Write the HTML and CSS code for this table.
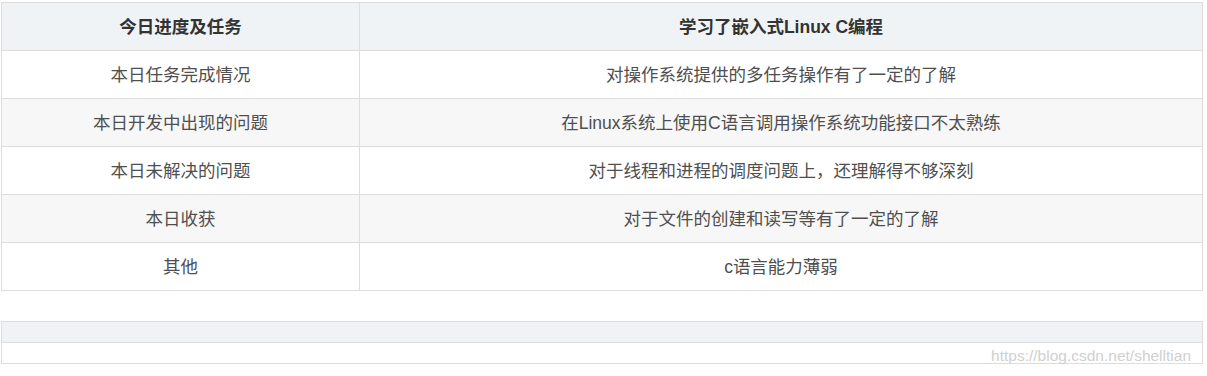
FILE: index.html
```html
<!DOCTYPE html>
<html lang="zh-CN">
<head>
<meta charset="utf-8">
<title>今日进度及任务</title>
<link rel="stylesheet" href="styles.css">
</head>
<body>
<div class="page">
  <table class="report">
    <thead>
      <tr>
        <th class="col-a">今日进度及任务</th>
        <th>学习了嵌入式Linux C编程</th>
      </tr>
    </thead>
    <tbody>
      <tr><td>本日任务完成情况</td><td>对操作系统提供的多任务操作有了一定的了解</td></tr>
      <tr><td>本日开发中出现的问题</td><td>在Linux系统上使用C语言调用操作系统功能接口不太熟练</td></tr>
      <tr><td>本日未解决的问题</td><td>对于线程和进程的调度问题上，还理解得不够深刻</td></tr>
      <tr><td>本日收获</td><td>对于文件的创建和读写等有了一定的了解</td></tr>
      <tr><td>其他</td><td>c语言能力薄弱</td></tr>
    </tbody>
  </table>
  <div class="second">
    <table class="empty">
      <thead><tr><th></th></tr></thead>
      <tbody><tr><td></td></tr></tbody>
    </table>
    <span class="watermark">https://blog.csdn.net/shelltian</span>
  </div>
</div>
</body>
</html>
```
FILE: styles.css
```css
html, body {
  margin: 0;
  padding: 0;
  background: #ffffff;
}
.page {
  padding: 2px 0 0 1px;
  width: 1202px;
  font-family: "Liberation Sans", "Noto Sans CJK SC", sans-serif;
}
.report {
  width: 1202px;
  border-collapse: collapse;
  table-layout: fixed;
  font-size: 17.5px;
  color: #4f4f4f;
}
.report th,
.report td {
  border: 1px solid #dddddd;
  height: 47px;
  padding: 0 8px;
  text-align: center;
  vertical-align: middle;
  line-height: 24px;
}
.report .col-a {
  width: 341px;
}
.report th {
  background: #eff3f5;
  color: #333333;
  font-weight: bold;
}
.report tbody tr:nth-child(even) td {
  background: #f7f7f7;
}
.second {
  position: relative;
  margin-top: 30px;
  width: 1202px;
}
.empty {
  width: 1202px;
  border-collapse: collapse;
}
.empty th,
.empty td {
  border: 1px solid #dddddd;
  height: 20px;
  padding: 0;
}
.empty th {
  background: #eff3f5;
}
.watermark {
  position: absolute;
  right: 12px;
  bottom: -1px;
  font-family: "Liberation Sans", sans-serif;
  font-size: 15.5px;
  line-height: 18px;
  color: #d0d0d0;
}
```
